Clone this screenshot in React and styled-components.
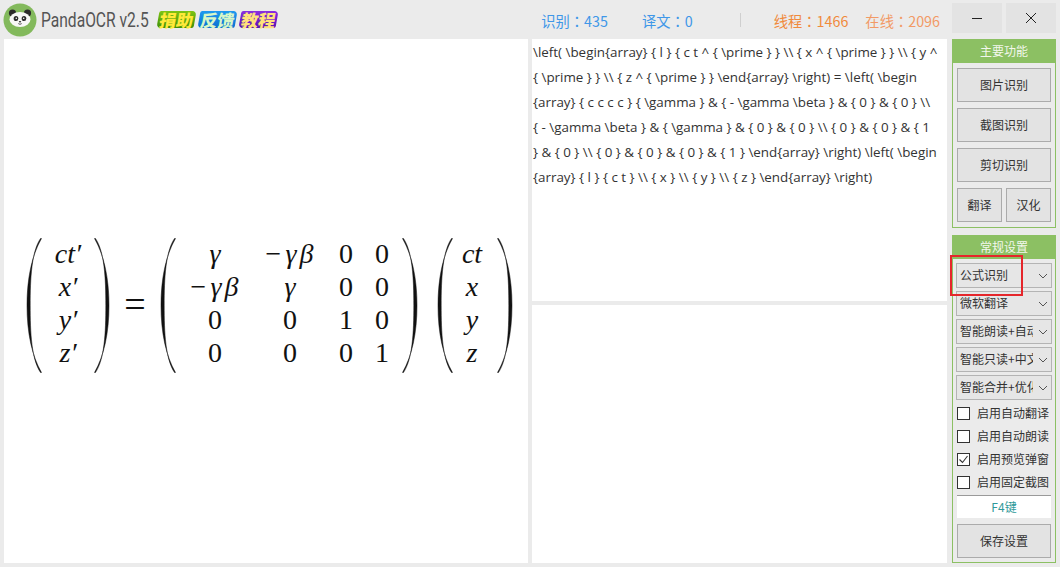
import React from "react";
import styled, { createGlobalStyle } from "styled-components";

const GlobalStyle = createGlobalStyle`
  html, body {
    margin: 0;
    padding: 0;
    background: #ebebeb;
    overflow: hidden;
  }
  * {
    box-sizing: border-box;
  }
`;

const UI_FONT = `"Noto Sans CJK SC", "Open Sans", sans-serif`;
const MATH_FONT = `"Liberation Serif", "DejaVu Serif", serif`;

const Window = styled.div`
  position: relative;
  width: 1060px;
  height: 567px;
  background: #ebebeb;
  font-family: ${UI_FONT};
  display: grid;
  grid-template-columns: 1fr 104px;
  column-gap: 5px;
  padding: 3px 4px 4px 4px;
`;

const MainColumn = styled.div`
  display: flex;
  flex-direction: column;
  min-width: 0;
`;

const TitleBar = styled.div`
  height: 36px;
  display: flex;
  align-items: center;
  margin-left: -1px;
`;

const Logo = styled.svg`
  width: 34px;
  height: 34px;
  flex: none;
  align-self: flex-start;
`;

const AppName = styled.div`
  font-family: Roboto, sans-serif;
  font-size: 20px;
  color: #555;
  width: 108px;
  margin: 0 0 3px 4px;
  white-space: nowrap;
  transform: scaleX(0.78);
  transform-origin: left center;
`;

const Badges = styled.div`
  display: flex;
  gap: 4px;
  margin: 0 0 3px 9px;
`;

const Badge = styled.div`
  width: 37px;
  height: 17px;
  border-radius: 2px 4px 2px 4px;
  transform: skewX(-10deg);
  background: ${(p) => p.$bg};
  color: ${(p) => p.$fg};
  font-size: 17px;
  line-height: 17px;
  font-weight: 900;
  text-align: center;
  white-space: nowrap;
`;

const Stats = styled.div`
  margin-left: auto;
  display: flex;
  align-items: center;
  font-family: "Noto Sans CJK TC", "Open Sans", sans-serif;
  font-size: 14.3px;
  padding: 0 7px 2px 0;
`;

const Stat = styled.span`
  color: ${(p) => p.$color};
  margin-left: ${(p) => p.$gap}px;
  white-space: nowrap;
`;

const Divider = styled.span`
  width: 1px;
  height: 14px;
  background: #cfcfcf;
  margin-left: 47px;
`;

const Content = styled.div`
  flex: 1;
  display: grid;
  grid-template-columns: 524px 1fr;
  column-gap: 4px;
  min-height: 0;
`;

const ImagePanel = styled.div`
  background: #fff;
  display: flex;
  align-items: center;
  justify-content: center;
  padding: 8px 0 0 7px;
`;

const TextColumn = styled.div`
  display: grid;
  grid-template-rows: 262px 1fr;
  row-gap: 4px;
`;

const TextPanel = styled.div`
  background: #fff;
  padding: 1px 0 0 1px;
  font-family: "Open Sans", ${UI_FONT};
  font-size: 13.4px;
  line-height: 25px;
  color: #333;
`;

const TextLine = styled.div`
  white-space: nowrap;
`;

const Formula = styled.div`
  display: flex;
  align-items: center;
  font-family: ${MATH_FONT};
  font-size: 28px;
  color: #111;
`;

const Paren = styled.svg`
  width: 16px;
  height: 135px;
  flex: none;
  transform: ${(p) => (p.$right ? "scaleX(-1)" : "none")};
`;

const Matrix = styled.div`
  display: grid;
  grid-template-columns: ${(p) => p.$cols};
  grid-auto-rows: 33px;
  align-items: center;
  justify-items: center;
  margin: -4px ${(p) => p.$right || 0}px 0 0;
`;

const Cell = styled.span`
  font-style: ${(p) => (p.$math ? "italic" : "normal")};
  letter-spacing: ${(p) => (p.$wide ? "3px" : "normal")};
  line-height: 33px;
  white-space: nowrap;
`;

const EqualSign = styled.span`
  width: 50px;
  text-align: center;
  font-size: 38px;
  line-height: 38px;
  margin-top: -2px;
`;

const ParenGap = styled.span`
  width: 19px;
  flex: none;
`;

const SideColumn = styled.div`
  display: flex;
  flex-direction: column;
`;

const WindowButtons = styled.div`
  height: 30px;
  display: grid;
  grid-template-columns: 1fr 1fr;
  column-gap: 4px;
  margin-bottom: 6px;
`;

const WindowButton = styled.div`
  background: #e3e3e3;
  display: flex;
  align-items: center;
  justify-content: center;
`;

const Group = styled.div`
  border: 1px solid #8cc063;
  background: #ebebeb;
  display: flex;
  flex-direction: column;
  height: ${(p) => p.$height}px;
  margin-bottom: ${(p) => p.$mb || 0}px;
`;

const GroupHeader = styled.div`
  height: 24px;
  margin: -1px -1px 0;
  background: #8cc063;
  color: #f2f7ec;
  font-size: 12px;
  line-height: 23px;
  text-align: center;
  flex: none;
`;

const GroupBody = styled.div`
  flex: 1;
  display: flex;
  flex-direction: column;
  padding: ${(p) => p.$pad};
  gap: ${(p) => p.$gap}px;
`;

const Button = styled.div`
  height: 34px;
  flex: ${(p) => (p.$half ? 1 : "none")};
  background: #e3e3e3;
  border: 1px solid #ababab;
  color: #333;
  font-size: 12px;
  padding-bottom: 1px;
  display: flex;
  align-items: center;
  justify-content: center;
`;

const SaveButton = styled(Button)`
  margin: 3px 1px 0;
`;

const ButtonRow = styled.div`
  display: flex;
  gap: 4px;
`;

const Select = styled.div`
  height: 25px;
  width: 96px;
  background: #e6e6e6;
  border: 1px solid #b4b4b4;
  display: flex;
  align-items: center;
  padding: 0 0 2px 3px;
  font-size: 12px;
  color: #333;
  position: relative;
`;

const SelectText = styled.span`
  width: 73px;
  overflow: hidden;
  white-space: nowrap;
`;

const Chevron = styled.svg`
  position: absolute;
  right: 3px;
  top: 9px;
  width: 10px;
  height: 6px;
`;

const CheckList = styled.div`
  margin-top: -1px;
`;

const CheckRow = styled.div`
  height: 23px;
  display: flex;
  align-items: center;
  font-size: 12px;
  color: #333;
  white-space: nowrap;
`;

const CheckLabel = styled.span`
  padding-bottom: 2px;
`;

const Box = styled.div`
  width: 13px;
  height: 13px;
  flex: none;
  background: #fff;
  border: 1px solid #333;
  margin: 0 7px 0 1px;
  display: flex;
  align-items: center;
  justify-content: center;
`;

const KeyField = styled.div`
  height: 23px;
  background: #fff;
  border-top: 1px solid #9a9a9a;
  color: #2f9a9a;
  font-size: 12px;
  line-height: 21px;
  text-align: center;
  margin: -2px 1px 0;
`;

const Highlight = styled.div`
  position: absolute;
  left: 950px;
  top: 255px;
  width: 73px;
  height: 41px;
  border: 2px solid #e5262b;
  pointer-events: none;
`;

const ocrLines = [
  "\\left( \\begin{array} { l } { c t ^ { \\prime } } \\\\ { x ^ { \\prime } } \\\\ { y ^",
  "{ \\prime } } \\\\ { z ^ { \\prime } } \\end{array} \\right) = \\left( \\begin",
  "{array} { c c c c } { \\gamma } & { - \\gamma \\beta } & { 0 } & { 0 } \\\\",
  "{ - \\gamma \\beta } & { \\gamma } & { 0 } & { 0 } \\\\ { 0 } & { 0 } & { 1",
  "} & { 0 } \\\\ { 0 } & { 0 } & { 0 } & { 1 } \\end{array} \\right) \\left( \\begin",
  "{array} { l } { c t } \\\\ { x } \\\\ { y } \\\\ { z } \\end{array} \\right)",
];

const selects = ["公式识别", "微软翻译", "智能朗读+自动朗读", "智能只读+中文", "智能合并+优化"];

const checks = [
  { label: "启用自动翻译", on: false },
  { label: "启用自动朗读", on: false },
  { label: "启用预览弹窗", on: true },
  { label: "启用固定截图", on: false },
];

const vectorRows = [
  ["ct′", "x′", "y′", "z′"],
  ["ct", "x", "y", "z"],
];

const lorentz = [
  ["γ", "−γβ", "0", "0"],
  ["−γβ", "γ", "0", "0"],
  ["0", "0", "1", "0"],
  ["0", "0", "0", "1"],
];

const ParenShape = ({ right }) => (
  <Paren viewBox="0 0 16 135" $right={right}>
    <path
      d="M15.5 0.5 C6 17 1 40 1 67.5 C1 95 6 118 15.5 134.5 L14.5 134.5 C5.5 121 4.2 95 4.2 67.5 C4.2 40 5.5 14 14.5 0.5 Z"
      fill="#111"
      stroke="#111"
      strokeWidth="0.5"
    />
  </Paren>
);

const PandaLogo = () => (
  <Logo viewBox="0 0 34 34">
    <circle cx="17" cy="17" r="16.5" fill="#83b95c" />
    <circle cx="9.5" cy="10" r="3.6" fill="#2b2b2b" />
    <circle cx="24.5" cy="10" r="3.6" fill="#2b2b2b" />
    <ellipse cx="17" cy="16.5" rx="10.5" ry="7.5" fill="#f7f7f7" />
    <ellipse cx="13" cy="15.5" rx="2.3" ry="2.6" fill="#2b2b2b" />
    <ellipse cx="21" cy="15.5" rx="2.3" ry="2.6" fill="#2b2b2b" />
    <circle cx="13.3" cy="15.2" r="0.8" fill="#fff" />
    <circle cx="20.7" cy="15.2" r="0.8" fill="#fff" />
    <ellipse cx="17" cy="18.8" rx="1.2" ry="0.8" fill="#2b2b2b" />
    <path d="M15.3 20.6 Q17 22 18.7 20.6" fill="none" stroke="#2b2b2b" strokeWidth="0.8" />
  </Logo>
);

const App = () => {
  return (
    <>
      <GlobalStyle />
      <Window>
        <MainColumn>
          <TitleBar>
            <PandaLogo />
            <AppName>PandaOCR v2.5</AppName>
            <Badges>
              <Badge $bg="linear-gradient(#7fc414, #3f8f08)" $fg="#ffe93a">捐助</Badge>
              <Badge $bg="linear-gradient(#1f9af0, #0a6fd0)" $fg="#d7f7c8">反馈</Badge>
              <Badge $bg="linear-gradient(#8a2fe0, #5a12b0)" $fg="#ffe27a">教程</Badge>
            </Badges>
            <Stats>
              <Stat $color="#3f97e8" $gap={0}>识别：435</Stat>
              <Stat $color="#3f97e8" $gap={34}>译文：0</Stat>
              <Divider />
              <Stat $color="#f08a3c" $gap={33}>线程：1466</Stat>
              <Stat $color="#f29a66" $gap={17}>在线：2096</Stat>
            </Stats>
          </TitleBar>
          <Content>
            <ImagePanel>
              <Formula>
                <ParenShape />
                <Matrix $cols="52px">
                  {vectorRows[0].map((v) => (
                    <Cell $math key={v}>{v}</Cell>
                  ))}
                </Matrix>
                <ParenShape right />
                <EqualSign>=</EqualSign>
                <ParenShape />
                <Matrix $cols="78px 72px 40px 32px" $right={4}>
                  {lorentz.flat().map((v, i) => (
                    <Cell $math={/[γβ]/.test(v)} $wide={v.length > 1} key={i}>{v}</Cell>
                  ))}
                </Matrix>
                <ParenShape right />
                <ParenGap />
                <ParenShape />
                <Matrix $cols="38px" $right={6}>
                  {vectorRows[1].map((v) => (
                    <Cell $math key={v}>{v}</Cell>
                  ))}
                </Matrix>
                <ParenShape right />
              </Formula>
            </ImagePanel>
            <TextColumn>
              <TextPanel>
                {ocrLines.map((line) => (
                  <TextLine key={line}>{line}</TextLine>
                ))}
              </TextPanel>
              <TextPanel />
            </TextColumn>
          </Content>
        </MainColumn>
        <SideColumn>
          <WindowButtons>
            <WindowButton>
              <svg width="12" height="12" viewBox="0 0 12 12">
                <path d="M1 6.5 H11" stroke="#222" strokeWidth="1" />
              </svg>
            </WindowButton>
            <WindowButton>
              <svg width="12" height="12" viewBox="0 0 12 12">
                <path d="M1 1 L11 11 M11 1 L1 11" stroke="#222" strokeWidth="1" />
              </svg>
            </WindowButton>
          </WindowButtons>
          <Group $height={189} $mb={7}>
            <GroupHeader>主要功能</GroupHeader>
            <GroupBody $pad="5px 4px 0" $gap={6}>
              <Button>图片识别</Button>
              <Button>截图识别</Button>
              <Button>剪切识别</Button>
              <ButtonRow>
                <Button $half>翻译</Button>
                <Button $half>汉化</Button>
              </ButtonRow>
            </GroupBody>
          </Group>
          <Group $height={328}>
            <GroupHeader>常规设置</GroupHeader>
            <GroupBody $pad="4px 3px 0" $gap={3}>
              {selects.map((s) => (
                <Select key={s}>
                  <SelectText>{s}</SelectText>
                  <Chevron viewBox="0 0 10 6">
                    <path d="M1 1 L5 5 L9 1" fill="none" stroke="#555" strokeWidth="1" />
                  </Chevron>
                </Select>
              ))}
              <CheckList>
                {checks.map((c) => (
                  <CheckRow key={c.label}>
                    <Box>
                      {c.on && (
                        <svg width="11" height="11" viewBox="0 0 11 11">
                          <path d="M1.5 5.5 L4.5 8.5 L9.5 2" fill="none" stroke="#333" strokeWidth="1.1" />
                        </svg>
                      )}
                    </Box>
                    <CheckLabel>{c.label}</CheckLabel>
                  </CheckRow>
                ))}
              </CheckList>
              <KeyField>F4键</KeyField>
              <SaveButton>保存设置</SaveButton>
            </GroupBody>
          </Group>
        </SideColumn>
        <Highlight />
      </Window>
    </>
  );
};

export default App;
